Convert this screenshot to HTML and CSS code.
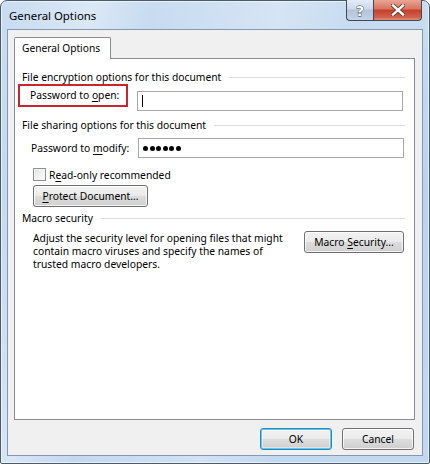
FILE: index.html
```html
<!DOCTYPE html>
<html lang="en">
<head>
<meta charset="utf-8">
<title>General Options</title>
<link rel="stylesheet" href="styles.css">
</head>
<body>
<div class="window">
  <div class="titlebar">
    <span class="caption">General Options</span>
    <div class="caption-buttons">
      <div class="cap-btn help"><span class="help-glyph">?</span></div>
      <div class="cap-btn close">
        <svg width="14" height="12" viewBox="0 0 14 12">
          <path d="M2 1.5 L12 10.5 M12 1.5 L2 10.5" stroke="#6b3a33" stroke-width="4.2" stroke-linecap="square"/>
          <path d="M2 1.5 L12 10.5 M12 1.5 L2 10.5" stroke="#ffffff" stroke-width="2.4" stroke-linecap="square"/>
        </svg>
      </div>
    </div>
  </div>

  <div class="client">
    <div class="tabstrip">
      <div class="tab">General Options</div>
    </div>

    <div class="panel">
      <div class="group-head head-encrypt">
        <span>File encryption options for this document</span>
        <i class="rule"></i>
      </div>
      <div class="row row-open">
        <div class="label-mark">Password to <u>o</u>pen:</div>
        <div class="textbox textbox-open"><i class="caret"></i></div>
      </div>

      <div class="group-head head-share">
        <span>File sharing options for this document</span>
        <i class="rule"></i>
      </div>
      <div class="row row-modify">
        <div class="label">Password to <u>m</u>odify:</div>
        <div class="textbox textbox-modify">
          <span class="dots"><i></i><i></i><i></i><i></i><i></i><i></i></span>
        </div>
      </div>
      <div class="check-row">
        <span class="checkbox"></span>
        <span>R<u>e</u>ad-only recommended</span>
      </div>
      <button class="btn btn-protect"><u>P</u>rotect Document...</button>

      <div class="group-head head-macro">
        <span>Macro security</span>
        <i class="rule"></i>
      </div>
      <div class="macro-row">
        <p class="macro-text">Adjust the security level for opening files that might<br>contain macro viruses and specify the names of<br>trusted macro developers.</p>
        <button class="btn btn-macro">Macro <u>S</u>ecurity...</button>
      </div>
    </div>

    <div class="footer">
      <button class="btn btn-ok">OK</button>
      <button class="btn btn-cancel">Cancel</button>
    </div>
  </div>
</div>
</body>
</html>
```

FILE: styles.css
```css
* { box-sizing: border-box; }

html, body {
  margin: 0;
  padding: 0;
  background: #ffffff;
}

body {
  font-family: "Noto Sans", "Open Sans", sans-serif;
  font-size: 10.3px;
  color: #000;
}

u { text-decoration-thickness: 1px; text-underline-offset: 2px; }

/* Aero window frame */
.window {
  width: 430px;
  height: 464px;
  border: 1px solid #4a5a6e;
  border-radius: 7px 7px 2px 2px;
  padding: 0 6px 7px 6px;
  background:
    linear-gradient(100deg, rgba(255,255,255,0) 0%, rgba(255,255,255,0.35) 18%, rgba(255,255,255,0) 30%, rgba(255,255,255,0.25) 55%, rgba(255,255,255,0) 70%),
    linear-gradient(180deg, #c9dcf1 0%, #bcd3ee 40%, #c3d8f0 100%);
  box-shadow: inset 0 0 0 1px rgba(255,255,255,0.6);
  display: flex;
  flex-direction: column;
}

.titlebar {
  height: 28px;
  display: flex;
  align-items: flex-start;
  justify-content: space-between;
  flex: none;
}

.caption {
  font-size: 11.4px;
  margin: 7px 0 0 2px;
  color: #000;
}

.caption-buttons {
  display: flex;
  margin-top: -1px;
  margin-right: 1px;
}

.cap-btn {
  height: 21px;
  border: 1px solid #3d4a5c;
  border-top: none;
  display: flex;
  align-items: center;
  justify-content: center;
}

.cap-btn.help {
  width: 27px;
  border-right: none;
  border-radius: 0 0 0 4px;
  background: linear-gradient(180deg, #e3ebf5 0%, #ccd9e8 45%, #b2c3d8 50%, #c5d4e6 100%);
}

/* white question mark with a dark outline */
.help-glyph {
  font-family: "DejaVu Sans", sans-serif;
  font-weight: bold;
  font-size: 14px;
  color: #ffffff;
  -webkit-text-stroke: 0.8px #2f3d50;
  paint-order: stroke fill;
  line-height: 1;
  margin-top: 1px;
}

.cap-btn.close {
  width: 49px;
  border-radius: 0 0 4px 0;
  background: linear-gradient(180deg, #e8a596 0%, #d9745f 45%, #c63f28 50%, #d1604a 85%, #e08c75 100%);
}

/* client area */
.client {
  flex: 1;
  border: 1px solid #8498b2;
  background: #f0f0f0;
  padding: 7px 7px 0 6px;
  display: flex;
  flex-direction: column;
}

.tabstrip {
  display: flex;
  height: 21px;
  position: relative;
  z-index: 1;
}

.tab {
  width: 97px;
  height: 22px;
  border: 1px solid #898c95;
  border-bottom: none;
  border-radius: 2px 2px 0 0;
  background: #ffffff;
  padding: 3px 0 0 7px;
  font-size: 10.2px;
}

.panel {
  width: 401px;
  height: 362px;
  border: 1px solid #898c95;
  background: #ffffff;
  padding: 11px 9px 0 0;
}

.group-head {
  display: flex;
  align-items: center;
  height: 14px;
  line-height: 14px;
  padding-left: 7px;
}

.group-head .rule {
  flex: 1;
  height: 1px;
  background: #dcdcdc;
  margin-left: 8px;
}

.row { display: flex; }

.row-open {
  height: 26px;
  align-items: flex-start;
  padding-left: 3px;
}

.label-mark {
  width: 110px;
  height: 23px;
  border: 2px solid #c9252c;
  padding: 2px 0 0 10px;
  line-height: 15px;
}

.textbox {
  height: 20px;
  border: 1px solid #a8a8a8;
  background: #fff;
  display: flex;
  align-items: center;
}

.textbox-open {
  width: 266px;
  margin: 7px 0 0 9px;
  padding-left: 4px;
}

.caret {
  width: 1px;
  height: 12px;
  background: #000;
}

.head-share { margin-top: 8px; }

.row-modify {
  margin-top: 6px;
  align-items: center;
  padding-left: 16px;
}

.row-modify .label { width: 107px; }

.textbox-modify {
  width: 266px;
  padding-left: 4px;
}

.dots { display: flex; gap: 1.5px; }
.dots i {
  width: 5px;
  height: 5px;
  border-radius: 50%;
  background: #000;
}

.check-row {
  margin: 10px 0 0 18px;
  display: flex;
  align-items: center;
  height: 13px;
  gap: 3px;
}

.checkbox {
  width: 13px;
  height: 13px;
  border: 1px solid #8e8f8f;
  background: linear-gradient(135deg, #dcdcdc 0%, #f4f4f4 60%, #ffffff 100%);
  box-shadow: inset 0 0 0 1px #f4f4f4;
}

/* Win7 push buttons */
.btn {
  font-family: inherit;
  font-size: 10.3px;
  color: #000;
  height: 22px;
  border: 1px solid #707070;
  border-radius: 3px;
  padding: 0;
  background: linear-gradient(180deg, #f2f2f2 0%, #ebebeb 48%, #dddddd 52%, #cfcfcf 100%);
  box-shadow: inset 0 0 0 1px rgba(255,255,255,0.75);
  line-height: 18px;
}

.btn-protect {
  display: block;
  width: 115px;
  margin: 4px 0 0 18px;
}

.head-macro { margin-top: 4px; }

.macro-row {
  display: flex;
  justify-content: space-between;
  align-items: flex-start;
  margin-top: 6px;
  padding-left: 18px;
  padding-right: 1px;
}

.macro-text {
  margin: 0;
  padding-top: 1px;
  line-height: 13px;
}

.btn-macro { width: 100px; }

.footer {
  display: flex;
  justify-content: flex-end;
  gap: 10px;
  margin-top: 8px;
  padding-right: 1px;
}

.btn-ok, .btn-cancel { width: 72px; }

.btn-ok {
  border-color: #3c7fb1;
  box-shadow: inset 0 0 0 1px #48d2f9, inset 0 0 0 2px rgba(255,255,255,0.4);
}
```
